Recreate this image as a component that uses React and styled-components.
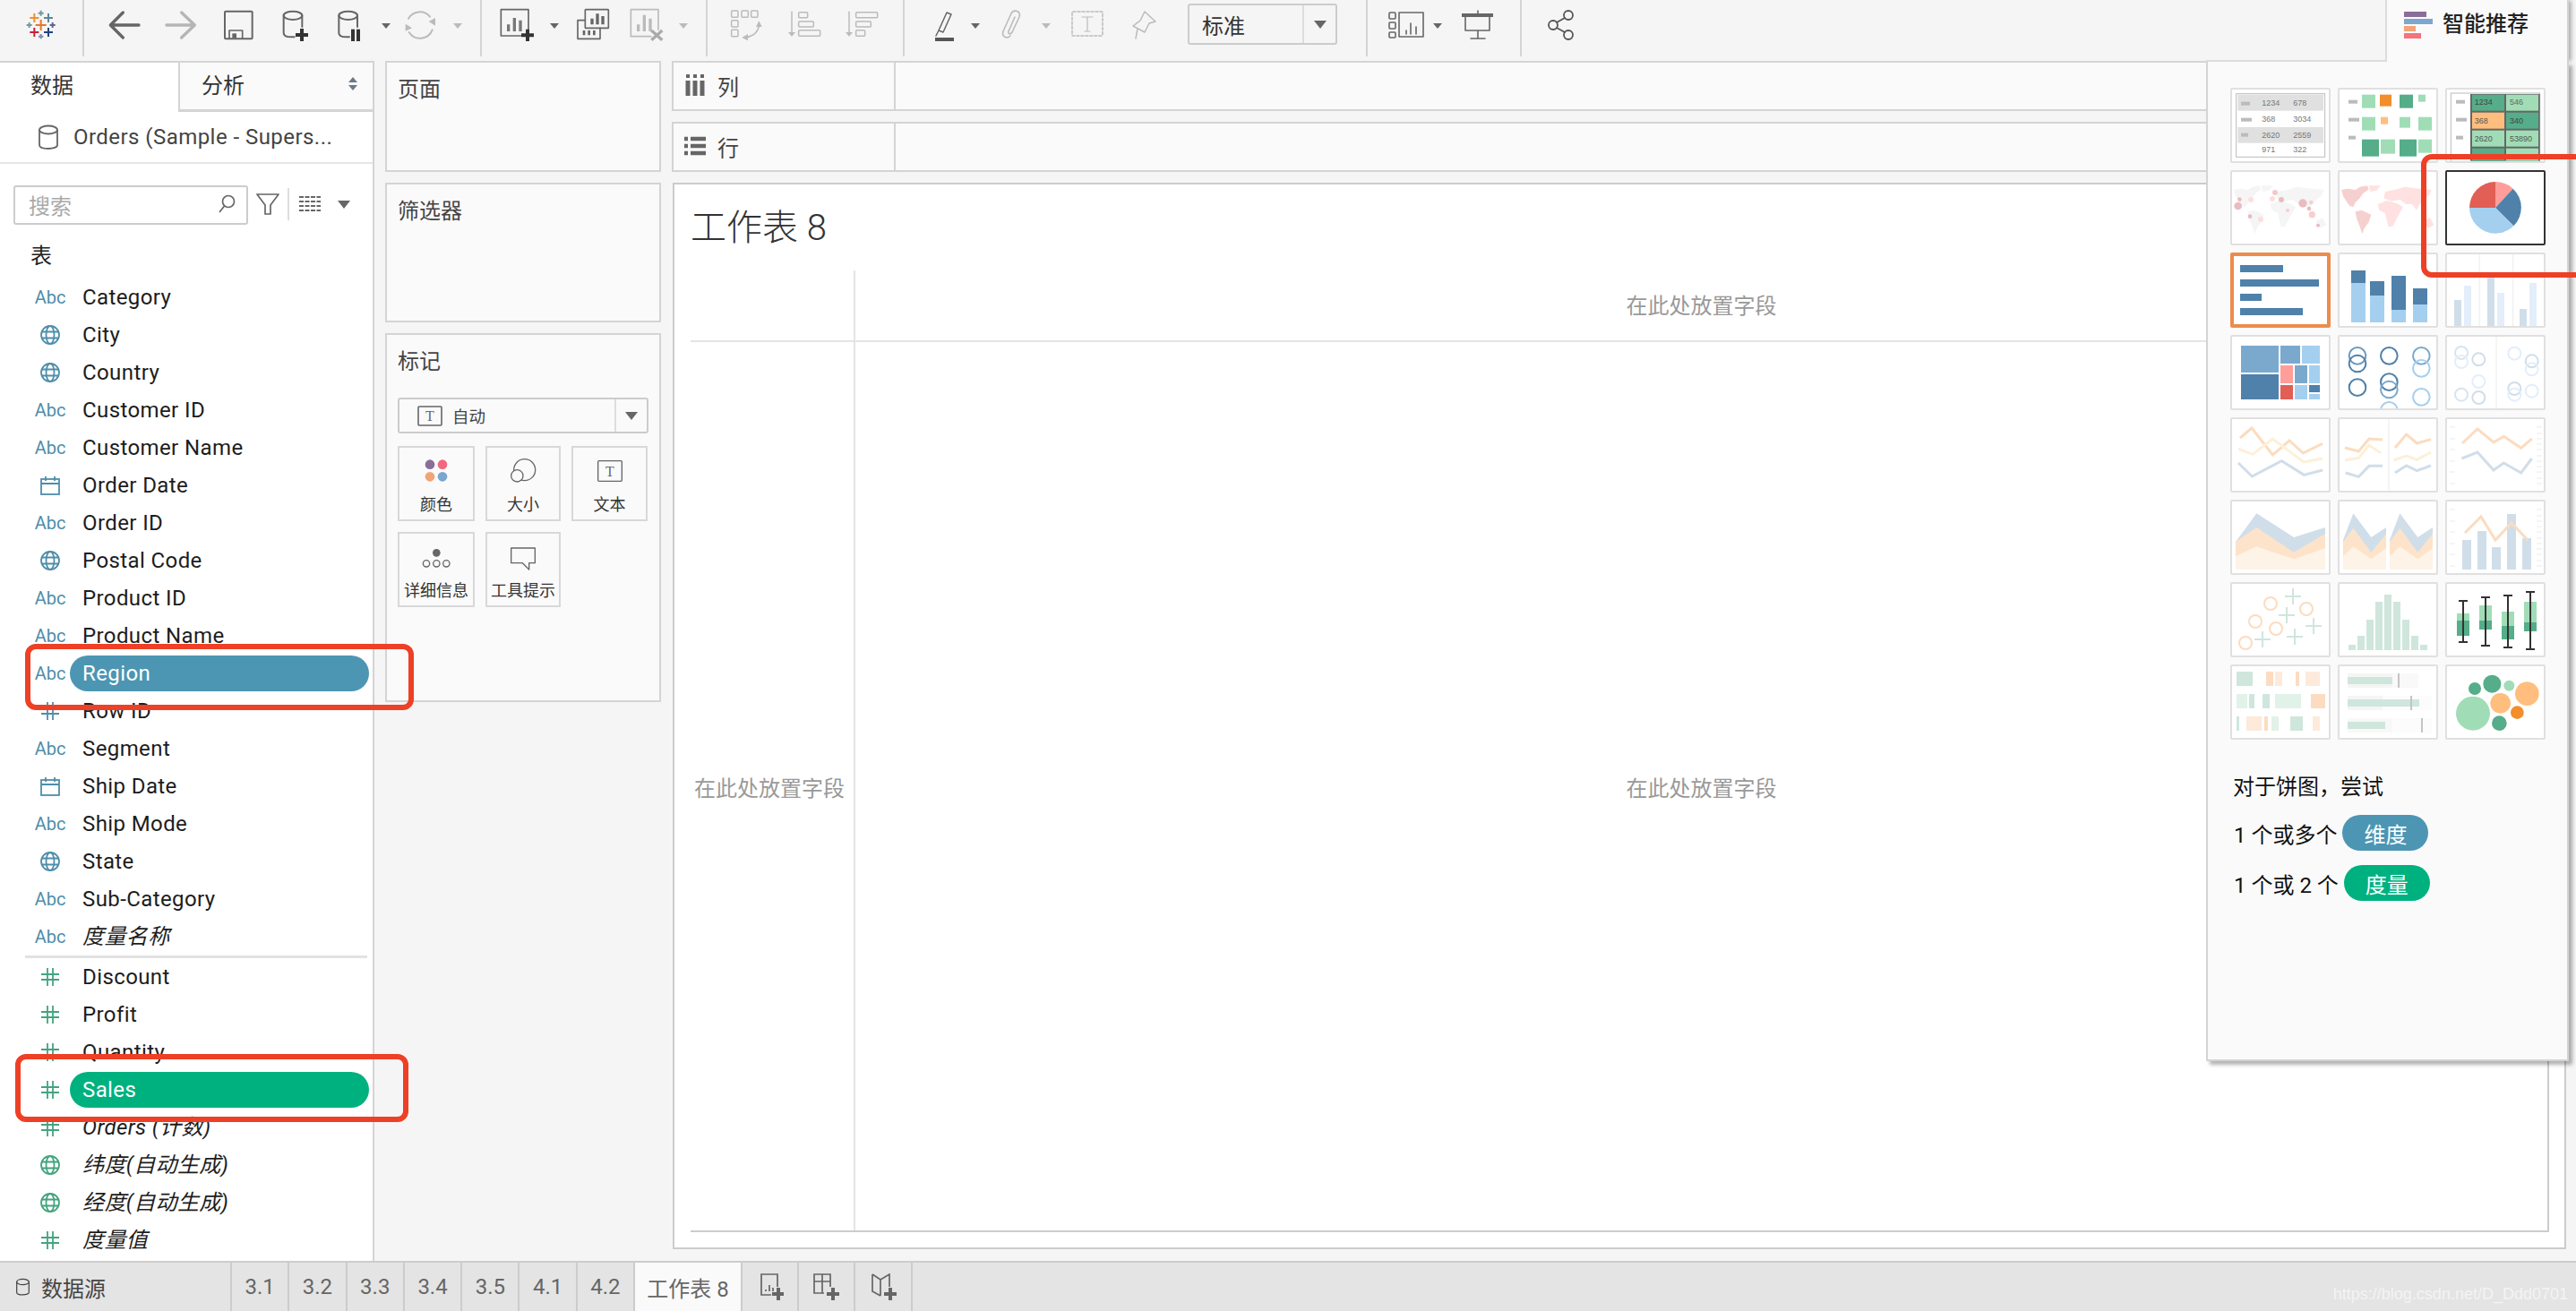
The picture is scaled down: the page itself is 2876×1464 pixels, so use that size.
import React from 'react';
import styled, { createGlobalStyle } from 'styled-components';

const GlobalStyle = createGlobalStyle`
  html, body { margin: 0; padding: 0; background: #f5f5f5; }
  body { font-family: Roboto, "Noto Sans CJK SC", sans-serif; color: #222; }
  * { box-sizing: border-box; }
`;

const LINE = '#d4d4d4';
const DIM = '#4e8eaa';
const MEASURE = '#43a47f';

const Page = styled.div`
  position: relative;
  width: 2876px;
  height: 1464px;
  overflow: hidden;
  display: flex;
  flex-direction: column;
  background: #f5f5f5;
`;

/* toolbar */
const Toolbar = styled.header`
  flex: 0 0 68px;
  display: flex;
  align-items: flex-start;
`;
const ToolSep = styled.div`
  flex: 0 0 2px;
  height: 63px;
  background: ${LINE};
`;
const ToolSvg = styled.svg`
  flex: none;
  display: block;
`;
const ModeSelect = styled.div`
  margin: 4px 32px 0 21px;
  width: 167px;
  height: 46px;
  display: flex;
  align-items: center;
  border: 2px solid #ccc;
  border-radius: 3px;
  font-size: 24px;
  color: #333;
`;
const ModeLabel = styled.span`
  flex: 1;
  padding-left: 14px;
`;
const CaretCell = styled.div`
  flex: 0 0 ${p => p.$w}px;
  height: 100%;
  border-left: 2px solid #ddd;
  display: flex;
  align-items: center;
  justify-content: center;
`;
const Caret = styled.i`
  display: block;
  width: 0;
  height: 0;
  border-left: 7px solid transparent;
  border-right: 7px solid transparent;
  border-top: 9px solid #666;
`;

const Tool = ({ x, w, k = 3, children }) => (
  <ToolSvg width={w} height={63} viewBox={`${x} 0 ${w * k} ${63 * k}`} fill="none" strokeLinecap="round" strokeLinejoin="round">
    {children}
  </ToolSvg>
);

const Cross = ({ x, y, a, c, s = 6 }) => (
  <path d={`M${x - a} ${y}H${x + a}M${x} ${y - a}V${y + a}`} stroke={c} strokeWidth={s} strokeLinecap="butt" />
);

/* main */
const Main = styled.main`
  flex: 1;
  display: flex;
  min-height: 0;
`;

/* data pane */
const DataPane = styled.aside`
  flex: 0 0 418px;
  background: #fff;
  border-top: 2px solid ${LINE};
  border-right: 2px solid ${LINE};
  display: flex;
  flex-direction: column;
  overflow: hidden;
`;
const PaneTabs = styled.div`
  flex: 0 0 55px;
  display: flex;
`;
const PaneTab = styled.div`
  flex: 0 0 ${p => p.$w}px;
  display: flex;
  align-items: center;
  justify-content: space-between;
  padding: 0 17px 9px ${p => p.$pad}px;
  font-size: 24px;
  color: #333;
  ${p => p.$off && `
    background: #fafafa;
    border-left: 2px solid ${LINE};
    border-bottom: 3px solid ${LINE};
    padding-bottom: 6px;
  `}
`;
const UpDown = styled.svg`
  display: block;
`;
const SourceRow = styled.div`
  flex: 0 0 58px;
  display: flex;
  align-items: center;
  gap: 17px;
  padding-left: 43px;
  border-bottom: 2px solid #e6e6e6;
  font-size: 24px;
  letter-spacing: 0.45px;
  color: #444;
  white-space: nowrap;
`;
const SearchRow = styled.div`
  flex: 0 0 68px;
  padding: 24px 0 0 15px;
  display: flex;
  align-items: flex-start;
`;
const SearchBox = styled.div`
  flex: 0 0 262px;
  height: 44px;
  border: 2px solid #ccc;
  border-radius: 3px;
  display: flex;
  align-items: center;
  justify-content: space-between;
  padding: 0 12px 2px 15px;
  font-size: 24px;
  color: #aaa;
`;
const SearchTool = styled.svg`
  flex: none;
  display: block;
  margin: ${p => p.$top}px 0 0 ${p => p.$left}px;
`;
const SearchSep = styled.div`
  flex: 0 0 2px;
  height: 36px;
  margin: 3px 0 0 9px;
  background: #ddd;
`;
const ListTitle = styled.div`
  flex: 0 0 60px;
  padding: 21px 0 0 34px;
  font-size: 24px;
  line-height: 28px;
  color: #222;
`;
const FieldList = styled.div`
  display: flex;
  flex-direction: column;
`;
const FieldRow = styled.div`
  height: 42px;
  display: flex;
  align-items: center;
  padding-left: 34px;
`;
const FieldIcon = styled.div`
  flex: 0 0 44px;
  display: flex;
  justify-content: center;
  align-items: center;
  font-size: 20px;
  color: ${p => p.$c};
`;
const FieldName = styled.div`
  flex: 0 0 334px;
  height: 40px;
  line-height: 40px;
  padding-left: 14px;
  border-radius: 20px;
  font-size: 24px;
  letter-spacing: 0.4px;
  white-space: nowrap;
  color: ${p => (p.$pill ? '#fff' : '#1d1d1d')};
  background: ${p => p.$pill || 'transparent'};
  font-style: ${p => (p.$em ? 'italic' : 'normal')};
`;
const FieldRule = styled.div`
  height: 3px;
  margin: 0 6px 0 28px;
  background: #e2e2e2;
`;

/* cards column */
const CardsColumn = styled.section`
  flex: 0 0 332px;
  padding: 0 12px;
  display: flex;
  flex-direction: column;
  gap: 12px;
`;
const Panel = styled.div`
  flex: 0 0 ${p => p.$h}px;
  background: #fafafa;
  border: 2px solid ${LINE};
  padding: 16px 12px 0;
`;
const PanelTitle = styled.div`
  font-size: 24px;
  line-height: 28px;
  color: #444;
`;
const MarkSelect = styled.div`
  margin-top: 26px;
  height: 40px;
  border: 2px solid #ccc;
  border-radius: 3px;
  display: flex;
  align-items: center;
  font-size: 18.5px;
  color: #444;
`;
const MarkLabel = styled.div`
  flex: 1;
  display: flex;
  align-items: center;
  gap: 11px;
  padding-left: 20px;
`;
const MarkGrid = styled.div`
  margin-top: 14px;
  display: grid;
  grid-template-columns: 86px 84px 85px;
  grid-auto-rows: 84px;
  gap: 12px;
`;
const MarkCard = styled.div`
  border: 2px solid #d8d8d8;
  display: flex;
  flex-direction: column;
  align-items: center;
  padding-top: 6px;
  font-size: 18px;
  line-height: 24px;
  color: #333;
  white-space: nowrap;
`;
const MarkIcon = styled.svg`
  display: block;
  margin-bottom: 10px;
  flex: none;
`;

/* view column */
const ViewColumn = styled.section`
  flex: 1;
  min-width: 0;
  padding: 0 11px 13px 0;
  display: flex;
  flex-direction: column;
  gap: 12px;
`;
const Shelf = styled.div`
  flex: 0 0 56px;
  display: flex;
  background: #fafafa;
  border: 2px solid ${LINE};
`;
const ShelfHead = styled.div`
  flex: 0 0 248px;
  border-right: 2px solid ${LINE};
  display: flex;
  align-items: center;
  gap: 13px;
  padding: 0 0 2px 12px;
  font-size: 24px;
  color: #444;
`;
const Sheet = styled.div`
  flex: 1;
  min-height: 0;
  background: #fff;
  border: 2px solid #ccc;
  margin-left: 1px;
  padding: 0 17px 17px 18px;
  display: flex;
  flex-direction: column;
`;
const SheetTitle = styled.h1`
  flex: 0 0 96px;
  margin: 0;
  padding: 22px 0 0;
  font-size: 40px;
  line-height: 54px;
  font-weight: 300;
  color: #333;
`;
const Plot = styled.div`
  flex: 1;
  display: grid;
  grid-template-columns: 184px 1fr;
  grid-template-rows: 80px 1fr;
  border-right: 2px solid #ccc;
  border-bottom: 2px solid #ccc;
`;
const DropCell = styled.div`
  display: flex;
  align-items: center;
  justify-content: center;
  font-size: 24px;
  color: #999;
  ${p => p.$right && 'border-right: 2px solid #e4e4e4; padding-right: 6px;'}
  ${p => p.$under && 'border-bottom: 2px solid #e4e4e4; padding-bottom: 3px;'}
`;

/* sheet tabs */
const TabBar = styled.footer`
  flex: 0 0 56px;
  display: flex;
  background: #e4e4e4;
  border-top: 2px solid #ccc;
  font-size: 24px;
  color: #666;
`;
const SourceTab = styled.div`
  flex: 0 0 259px;
  display: flex;
  align-items: center;
  gap: 13px;
  padding-left: 18px;
  color: #444;
  border-right: 2px solid #ccc;
`;
const SheetTab = styled.div`
  flex: 0 0 ${p => p.$w}px;
  display: flex;
  align-items: center;
  justify-content: center;
  padding-left: ${p => p.$shift || 0}px;
  border-right: 2px solid #ccc;
  background: ${p => (p.$active ? '#fafafa' : 'transparent')};
`;
const Watermark = styled.div`
  position: absolute;
  right: 9px;
  bottom: 8px;
  font-family: "Liberation Sans", sans-serif;
  font-size: 18px;
  color: rgba(255, 255, 255, 0.6);
`;

/* show me flyout */
const ShowMe = styled.aside`
  position: absolute;
  top: 0;
  right: 8px;
  width: 405px;
  height: 1185px;
  display: flex;
  flex-direction: column;
`;
const ShowMeHead = styled.div`
  flex: 0 0 69px;
  display: flex;
`;
const HeadFiller = styled.div`
  flex: 0 0 202px;
  background: #f5f5f5;
  border-right: 2px solid #dcdcdc;
  border-bottom: 2px solid #dcdcdc;
`;
const HeadTab = styled.div`
  flex: 1;
  background: #fafafa;
  border-right: 2px solid ${LINE};
  box-shadow: 4px 0 4px -1px rgba(0, 0, 0, 0.28);
  display: flex;
  align-items: flex-start;
  gap: 11px;
  padding: 13px 0 0 19px;
  font-size: 24px;
  line-height: 28px;
  font-weight: 500;
  color: #222;
`;
const ShowMeBody = styled.div`
  flex: 1;
  background: #fafafa;
  border: 2px solid ${LINE};
  border-top: 0;
  box-shadow: 4px 4px 4px rgba(0, 0, 0, 0.3);
  padding: 29px 0 0 25px;
`;
const TileGrid = styled.div`
  display: grid;
  grid-template-columns: repeat(3, 112px);
  grid-auto-rows: 84px;
  gap: 8px;
`;
const Tile = styled.div`
  background: #fff;
  border: 2px solid ${p => p.$line || '#e0e0e0'};
  border-radius: 2px;
  ${p => p.$thick && `box-shadow: inset 0 0 0 2px ${p.$line};`}
`;
const TileSvg = styled.svg`
  display: block;
`;
const Hint = styled.div`
  margin: 39px 0 0 3px;
  font-size: 24px;
  line-height: 28px;
  color: #111;
`;
const HintRow = styled.div`
  display: flex;
  align-items: center;
  height: 40px;
  margin: ${p => p.$top}px 0 0 4px;
  font-size: 24px;
  color: #111;
  white-space: pre;
`;
const HintPill = styled.span`
  width: 96px;
  height: 40px;
  margin-left: ${p => p.$left}px;
  border-radius: 20px;
  background: ${p => p.$c};
  color: #fff;
  display: flex;
  align-items: center;
  justify-content: center;
`;

const Callout = styled.div`
  position: absolute;
  left: ${p => p.$x}px;
  top: ${p => p.$y}px;
  width: ${p => p.$w}px;
  height: ${p => p.$h}px;
  border: 6px solid #ee4026;
  border-radius: 12px;
  pointer-events: none;
`;

/* field icons */
const GlobeIcon = ({ c }) => (
  <svg width="22" height="22" viewBox="0 0 22 22" fill="none" stroke={c} strokeWidth="1.8">
    <circle cx="11" cy="11" r="10" />
    <ellipse cx="11" cy="11" rx="4.5" ry="10" />
    <path d="M1.5 7.5h19M1.5 14.5h19" />
  </svg>
);
const CalIcon = ({ c }) => (
  <svg width="22" height="21" viewBox="0 0 22 21" fill="none" stroke={c} strokeWidth="1.8">
    <rect x="1" y="3" width="20" height="17" />
    <path d="M1 8h20M6 0v5M16 0v5" />
  </svg>
);
const HashIcon = ({ c }) => (
  <svg width="20" height="20" viewBox="0 0 20 20" fill="none" stroke={c} strokeWidth="1.8">
    <path d="M7 0v20M13 0v20M0 7h20M0 13h20" />
  </svg>
);
const TypeIcon = ({ t, c }) => {
  if (t === 'geo') return <GlobeIcon c={c} />;
  if (t === 'date') return <CalIcon c={c} />;
  if (t === 'num') return <HashIcon c={c} />;
  return 'Abc';
};

const dimensions = [
  ['abc', 'Category'], ['geo', 'City'], ['geo', 'Country'], ['abc', 'Customer ID'],
  ['abc', 'Customer Name'], ['date', 'Order Date'], ['abc', 'Order ID'], ['geo', 'Postal Code'],
  ['abc', 'Product ID'], ['abc', 'Product Name'], ['abc', 'Region', '#4c96b3'], ['num', 'Row ID'],
  ['abc', 'Segment'], ['date', 'Ship Date'], ['abc', 'Ship Mode'], ['geo', 'State'],
  ['abc', 'Sub-Category'], ['abc', '度量名称', null, true],
];
const measures = [
  ['num', 'Discount'], ['num', 'Profit'], ['num', 'Quantity'], ['num', 'Sales', '#00b180'],
  ['num', 'Orders (计数)', null, true], ['geo', '纬度(自动生成)', null, true],
  ['geo', '经度(自动生成)', null, true], ['num', '度量值', null, true],
];

const Field = ({ f, c }) => (
  <FieldRow>
    <FieldIcon $c={c}><TypeIcon t={f[0]} c={c} /></FieldIcon>
    <FieldName $pill={f[2]} $em={f[3]}>{f[1]}</FieldName>
  </FieldRow>
);

/* thumbnail helpers: coordinates are tile pixels x3 */
const B = ({ x, X, y, Y, c }) => <rect x={x} y={y} width={X - x} height={Y - y} fill={c} />;
const L = ({ p, c, w = 9 }) => <polyline points={p} fill="none" stroke={c} strokeWidth={w} strokeLinejoin="miter" />;
const A = ({ p, c }) => <polygon points={p} fill={c} />;
const O = ({ x, y, r, c, w = 6 }) => <circle cx={x} cy={y} r={r} fill="none" stroke={c} strokeWidth={w} />;
const F = ({ x, y, r, c }) => <circle cx={x} cy={y} r={r} fill={c} />;
const T = ({ x, y, children, c = '#777' }) => (
  <text x={x} y={y} fontSize="27" fill={c} fontFamily="'Liberation Sans', sans-serif">{children}</text>
);

const DK = '#4f81aa';
const MID = '#7ba9cd';
const LT = '#a5cfee';
const G1 = '#a0ddb6';
const G2 = '#55ad89';
const G3 = '#cfe6dc';
const G4 = '#e1f2e9';
const OR = '#fbdcc0';
const OR2 = '#fdeadb';
const YL = '#fdf0d8';
const BL = '#d0deea';
const BL2 = '#e3eefa';

const Thumb = ({ x, y, line, thick, children }) => (
  <Tile $line={line} $thick={thick}>
    <TileSvg width="108" height="80" viewBox={`${x + 6} ${y + 6} 324 240`}>{children}</TileSvg>
  </Tile>
);

const Continents = ({ a, b, dx }) => (
  <g transform={`translate(${dx} 0)`}>
    <A c={a} p="378,72 400,68 425,72 440,62 465,58 470,70 450,85 440,100 425,115 418,130 405,125 395,110 385,95" />
    <A c={b} p="470,58 510,58 495,75 475,78" />
    <A c={a} p="425,145 445,140 478,155 470,180 455,200 448,220 440,195 430,170" />
    <A c={b} p="525,78 555,72 590,62 640,68 680,72 672,90 655,105 640,120 630,140 615,120 595,120 575,105 545,110 520,100" />
    <A c={b} p="500,120 530,108 565,118 585,130 565,165 550,195 535,195 525,150 505,140" />
    <A c={b} p="655,175 675,165 688,190 670,200 655,190" />
  </g>
);

const axisTicks = (ys, x, X, c = '#f0f0f0') => ys.map(y => <B key={`${x}-${y}`} x={x} X={X} y={y - 2} Y={y + 2} c={c} />);
const leftTicks = [171, 210, 246, 285, 321, 360];
const rightTicks = [171, 192, 210, 228, 246, 267, 285, 303, 321, 342, 360];

const thumbs = [
  <Thumb key="1" x={150} y={295}>
    <rect x="170" y="315" width="297" height="212" fill="none" stroke="#bbb" strokeWidth="3" />
    <B x={175} X={462} y={318} Y={372} c="#e0e0e0" />
    <B x={175} X={462} y={427} Y={480} c="#e0e0e0" />
    <B x={186} X={216} y={342} Y={354} c="#bbb" />
    <B x={186} X={222} y={396} Y={408} c="#bbb" />
    <B x={186} X={210} y={447} Y={459} c="#bbb" />
    <T x={256} y={356}>1234</T><T x={361} y={356}>678</T>
    <T x={256} y={410}>368</T><T x={361} y={410}>3034</T>
    <T x={256} y={464}>2620</T><T x={361} y={464}>2559</T>
    <T x={256} y={512}>971</T><T x={361} y={512}>322</T>
  </Thumb>,
  <Thumb key="2" x={510} y={295}>
    <B x={546} X={576} y={336} Y={348} c="#bbb" /><B x={546} X={582} y={396} Y={408} c="#bbb" /><B x={546} X={570} y={456} Y={468} c="#bbb" />
    <B x={591} X={636} y={318} Y={363} c={G1} /><B x={651} X={690} y={318} Y={357} c="#f28e2b" /><B x={717} X={762} y={318} Y={363} c={G2} /><B x={780} X={804} y={318} Y={342} c={G1} />
    <B x={591} X={636} y={393} Y={438} c={G1} /><B x={654} X={678} y={393} Y={417} c="#ffbe7d" /><B x={717} X={753} y={393} Y={429} c={G1} /><B x={780} X={825} y={393} Y={438} c={G1} />
    <B x={591} X={648} y={468} Y={525} c={G2} /><B x={654} X={702} y={468} Y={516} c={G1} /><B x={717} X={774} y={468} Y={525} c={G2} /><B x={780} X={825} y={468} Y={513} c={G1} />
  </Thumb>,
  <Thumb key="3" x={870} y={295}>
    <rect x="889" y="313" width="298" height="240" fill="none" stroke="#bbb" strokeWidth="3" />
    <B x={906} X={936} y={336} Y={348} c="#bbb" /><B x={906} X={942} y={396} Y={408} c="#bbb" /><B x={906} X={930} y={456} Y={468} c="#bbb" />
    <B x={954} X={1187} y={316} Y={540} c="#666" />
    <B x={960} X={1068} y={318} Y={372} c={G2} /><B x={1074} X={1182} y={318} Y={372} c={G1} />
    <B x={960} X={1068} y={378} Y={432} c="#ffbe7d" /><B x={1074} X={1182} y={378} Y={432} c={G2} />
    <B x={960} X={1068} y={438} Y={492} c={G1} /><B x={1074} X={1182} y={438} Y={492} c={G1} />
    <B x={960} X={1068} y={498} Y={540} c={G2} /><B x={1074} X={1182} y={498} Y={540} c={G1} />
    <T x={968} y={352} c="#444">1234</T><T x={1086} y={352} c="#666">546</T>
    <T x={968} y={414} c="#555">368</T><T x={1086} y={414} c="#444">340</T>
    <T x={968} y={474} c="#555">2620</T><T x={1086} y={474} c="#555">53890</T>
  </Thumb>,
  <Thumb key="4" x={6} y={6}>
    <Continents a="#f5f5f5" b="#f5f5f5" dx={-360} />
    <F x={32} y={126} r={13} c="#e8bcc0" /><F x={37} y={104} r={7} c="#e8bcc0" /><F x={75} y={105} r={9} c="#fddede" />
    <F x={72} y={161} r={7} c="#e8bcc0" /><F x={108} y={171} r={9} c="#fddede" /><F x={156} y={81} r={9} c="#f2c9c9" />
    <F x={147} y={102} r={9} c="#fddede" /><F x={177} y={105} r={9} c="#e8bcc0" /><F x={198} y={141} r={6} c="#f7cfcf" />
    <F x={249} y={117} r={14} c="#e8bcc0" /><F x={277} y={114} r={7} c="#f7cfcf" /><F x={270} y={135} r={7} c="#e8bcc0" />
    <F x={280} y={155} r={11} c="#f7cfcf" /><F x={300} y={191} r={6} c="#e8bcc0" />
  </Thumb>,
  <Thumb key="5" x={366} y={6}>
    <Continents a="#f6d0ce" b="#ffe1e1" dx={0} />
  </Thumb>,
  <Thumb key="6" x={870} y={570} line="#333">
    <path d="M1038 696L1038 609A87 87 0 0 1 1097 632Z" fill="#ff9d9a" />
    <path d="M1038 696L1097 632A87 87 0 0 1 1099 757Z" fill={DK} />
    <path d="M1038 696L1099 757A87 87 0 0 1 951 696Z" fill={LT} />
    <path d="M1038 696L951 696A87 87 0 0 1 1038 609Z" fill="#e15f55" />
  </Thumb>,
  <Thumb key="7" x={150} y={846} line="#ed8c4c" thick>
    <B x={183} X={327} y={888} Y={912} c={DK} /><B x={183} X={447} y={936} Y={960} c={DK} />
    <B x={183} X={255} y={984} Y={1008} c={DK} /><B x={183} X={393} y={1032} Y={1056} c={DK} />
  </Thumb>,
  <Thumb key="8" x={510} y={846}>
    <B x={555} X={603} y={906} Y={948} c={DK} /><B x={555} X={603} y={948} Y={1080} c={LT} />
    <B x={618} X={666} y={942} Y={990} c={DK} /><B x={618} X={666} y={990} Y={1080} c={LT} />
    <B x={690} X={738} y={924} Y={1038} c={DK} /><B x={690} X={738} y={1038} Y={1080} c={LT} />
    <B x={762} X={810} y={966} Y={1020} c={DK} /><B x={762} X={810} y={1020} Y={1080} c={LT} />
  </Thumb>,
  <Thumb key="9" x={870} y={846}>
    <B x={983} X={987} y={852} Y={1092} c="#f0f0f0" /><B x={1095} X={1099} y={852} Y={1092} c="#f0f0f0" />
    <B x={900} X={924} y={1005} Y={1092} c={BL} /><B x={933} X={957} y={957} Y={1092} c={BL2} />
    <B x={1011} X={1035} y={912} Y={1092} c={BL} /><B x={1044} X={1068} y={981} Y={1092} c={BL2} />
    <B x={1119} X={1143} y={1035} Y={1092} c={BL} /><B x={1152} X={1176} y={948} Y={1092} c={BL2} />
  </Thumb>,
  <Thumb key="10" x={150} y={1122}>
    <B x={186} X={312} y={1158} Y={1248} c={MID} /><B x={318} X={384} y={1158} Y={1218} c={MID} /><B x={390} X={450} y={1158} Y={1218} c={LT} />
    <B x={186} X={312} y={1254} Y={1338} c={DK} />
    <B x={318} X={360} y={1224} Y={1284} c="#ff9d9a" /><B x={366} X={408} y={1224} Y={1284} c={MID} /><B x={414} X={450} y={1224} Y={1284} c={LT} />
    <B x={318} X={360} y={1290} Y={1338} c="#e15f55" /><B x={366} X={408} y={1290} Y={1338} c={LT} />
    <B x={414} X={450} y={1290} Y={1314} c={DK} /><B x={414} X={450} y={1320} Y={1338} c={LT} />
  </Thumb>,
  <Thumb key="11" x={510} y={1122}>
    <O x={576} y={1192} r={28} c="#6b9bc0" /><O x={576} y={1218} r={28} c={DK} /><O x={682} y={1192} r={28} c={DK} />
    <O x={790} y={1192} r={28} c={MID} /><O x={790} y={1234} r={28} c={LT} /><O x={576} y={1298} r={28} c={DK} />
    <O x={682} y={1280} r={28} c={DK} /><O x={682} y={1305} r={28} c={MID} /><O x={790} y={1330} r={28} c={LT} />
    <O x={682} y={1375} r={28} c={LT} />
  </Thumb>,
  <Thumb key="12" x={870} y={1122}>
    <B x={1039} X={1043} y={1128} Y={1368} c="#f0f0f0" />
    <O x={924} y={1182} r={21} c="#d8e4f0" /><O x={924} y={1212} r={21} c={BL2} /><O x={982} y={1204} r={21} c={BL} />
    <O x={982} y={1278} r={21} c={BL2} /><O x={924} y={1322} r={21} c="#d8e4f0" /><O x={982} y={1332} r={21} c={BL} />
    <O x={1102} y={1184} r={21} c={BL2} /><O x={1160} y={1210} r={21} c={BL} /><O x={1160} y={1237} r={21} c={BL2} />
    <O x={1102} y={1302} r={21} c={BL} /><O x={1102} y={1322} r={21} c={BL2} /><O x={1160} y={1310} r={21} c={BL2} />
  </Thumb>,
  <Thumb key="13" x={150} y={138}>
    <L p="183,207 222,174 292,264 348,216 394,258 459,226" c={OR} />
    <L p="178,244 225,262 292,210 396,288 459,276" c={YL} />
    <L p="177,291 223,336 322,284 397,331 459,315" c={BL} />
  </Thumb>,
  <Thumb key="14" x={510} y={138}>
    <B x={679} X={683} y={144} Y={384} c="#f0f0f0" />
    <L p="534,240 580,252 615,210 660,213" c={OR} /><L p="534,282 580,274 615,232 655,258" c={YL} /><L p="536,324 580,337 615,301 660,301" c={BL} />
    <L p="702,240 740,195 775,225 822,212" c={OR} /><L p="697,282 740,267 775,280 822,255" c={YL} /><L p="702,324 740,300 775,317 822,300" c={BL} />
  </Thumb>,
  <Thumb key="15" x={870} y={138}>
    {axisTicks(leftTicks, 885, 903)}{axisTicks(rightTicks, 1176, 1194)}
    <L p="927,225 978,177 1032,222 1066,202 1124,241 1160,210" c={OR} />
    <L p="925,276 978,255 1032,315 1066,291 1124,324 1160,276" c={BL} />
  </Thumb>,
  <Thumb key="16" x={150} y={414}>
    <A p="168,555 238,460 363,540 468,507 468,648 168,648" c={BL} />
    <A p="168,555 238,507 363,590 468,528 468,648 168,648" c="#fde3ca" />
    <A p="168,603 238,571 363,613 468,577 468,648 168,648" c="#fdf3e7" />
  </Thumb>,
  <Thumb key="17" x={510} y={414}>
    <A p="528,549 562,460 622,540 672,507 672,648 528,648" c={BL} />
    <A p="528,555 562,509 622,590 672,528 672,648 528,648" c="#fde3ca" />
    <A p="528,603 562,571 622,613 672,577 672,648 528,648" c="#fdf3e7" />
    <A p="684,549 718,460 778,540 828,507 828,648 684,648" c={BL} />
    <A p="684,555 718,509 778,590 828,528 828,648 684,648" c="#fde3ca" />
    <A p="684,603 718,571 778,613 828,577 828,648 684,648" c="#fdf3e7" />
  </Thumb>,
  <Thumb key="18" x={870} y={414}>
    {axisTicks(leftTicks.map(y => y + 276), 885, 903)}{axisTicks(rightTicks.map(y => y + 276), 1176, 1194)}
    <B x={927} X={957} y={549} Y={648} c={BL} /><B x={978} X={1008} y={519} Y={648} c={BL} /><B x={1026} X={1056} y={573} Y={648} c={BL} />
    <B x={1077} X={1107} y={462} Y={648} c={BL} /><B x={1128} X={1158} y={543} Y={648} c={BL} />
    <L p="936,525 990,471 1038,549 1092,492 1146,549" c={OR} />
  </Thumb>,
  <Thumb key="19" x={150} y={690}>
    <O x={285} y={762} r={21} c={OR} /><O x={405} y={780} r={21} c={OR} /><O x={234} y={822} r={21} c={OR} />
    <O x={303} y={846} r={21} c={OR} /><O x={201} y={894} r={21} c={OR} />
    <Cross x={360} y={738} a={27} c={G3} /><Cross x={339} y={801} a={27} c={G3} /><Cross x={429} y={837} a={27} c={G3} />
    <Cross x={258} y={882} a={27} c={G3} /><Cross x={366} y={873} a={27} c={G3} />
  </Thumb>,
  <Thumb key="20" x={510} y={690}>
    {[[546, 900], [576, 870], [606, 816], [636, 756], [666, 732], [696, 756], [726, 816], [756, 870], [786, 900]].map(([x, y]) => (
      <B key={x} x={x} X={x + 24} y={y} Y={918} c={G3} />
    ))}
  </Thumb>,
  <Thumb key="21" x={870} y={690}>
    {[[909, 795, 819, 870, 753, 891], [984, 768, 819, 849, 741, 903], [1059, 789, 837, 882, 735, 909], [1134, 756, 825, 855, 723, 915]].map(([x, a, b, c, t, m]) => (
      <g key={x}>
        <B x={x} X={x + 42} y={a} Y={b} c={G1} /><B x={x} X={x + 42} y={b} Y={c} c={G2} />
        <path d={`M${x + 21} ${t}V${m}M${x + 6} ${t}H${x + 36}M${x + 6} ${m}H${x + 36}`} stroke="#333" strokeWidth="6" fill="none" />
      </g>
    ))}
  </Thumb>,
  <Thumb key="22" x={150} y={966}>
    <B x={171} X={225} y={990} Y={1038} c={G3} /><B x={270} X={294} y={990} Y={1038} c={OR} /><B x={300} X={324} y={990} Y={1038} c={OR2} /><B x={369} X={381} y={990} Y={1038} c={OR} /><B x={402} X={450} y={990} Y={1038} c={OR2} />
    <B x={171} X={207} y={1065} Y={1113} c={G4} /><B x={213} X={231} y={1065} Y={1113} c={G3} /><B x={258} X={282} y={1065} Y={1113} c={G3} /><B x={300} X={387} y={1065} Y={1113} c={G4} /><B x={420} X={468} y={1065} Y={1113} c={OR} />
    <B x={171} X={180} y={1140} Y={1188} c={G3} /><B x={204} X={255} y={1140} Y={1188} c={OR2} /><B x={264} X={276} y={1140} Y={1188} c={OR} /><B x={288} X={312} y={1140} Y={1188} c={G4} /><B x={351} X={393} y={1140} Y={1188} c={G3} /><B x={426} X={450} y={1140} Y={1188} c={OR2} />
  </Thumb>,
  <Thumb key="23" x={510} y={966}>
    <B x={543} X={780} y={996} Y={1044} c="#f9f9f9" /><B x={543} X={693} y={996} Y={1044} c="#f5f5f5" /><B x={543} X={693} y={1008} Y={1032} c={G3} /><B x={711} X={717} y={996} Y={1044} c="#c4c4c4" />
    <B x={543} X={825} y={1071} Y={1119} c="#fcfcfc" /><B x={543} X={660} y={1071} Y={1119} c="#f5f5f5" /><B x={543} X={783} y={1083} Y={1107} c={G3} /><B x={753} X={759} y={1071} Y={1119} c="#c4c4c4" />
    <B x={543} X={825} y={1146} Y={1194} c="#fcfcfc" /><B x={543} X={693} y={1146} Y={1194} c="#f8f8f8" /><B x={543} X={669} y={1158} Y={1182} c={G3} /><B x={789} X={795} y={1146} Y={1194} c="#c4c4c4" />
  </Thumb>,
  <Thumb key="24" x={870} y={966}>
    <F x={963} y={1130} r={57} c={G1} /><F x={1027} y={1031} r={30} c={G2} /><F x={969} y={1047} r={21} c={G2} /><F x={1084} y={1037} r={18} c={G1} />
    <F x={1144} y={1064} r={40} c="#ffbe7d" /><F x={1055} y={1096} r={34} c="#ffbe7d" /><F x={1111} y={1127} r={22} c="#f28e2b" /><F x={1051} y={1163} r={25} c={G2} />
  </Thumb>,
];

const DbIcon = ({ w, h, c = '#666' }) => (
  <svg width={w} height={h} viewBox="0 0 22 28" fill="none" stroke={c} strokeWidth="1.8">
    <ellipse cx="11" cy="6" rx="10" ry="4.5" />
    <path d="M1 6v17c0 2.500 4.500 4 10 4s10-1.500 10-4V6" />
  </svg>
);

const TBox = ({ w, h }) => (
  <svg width={w} height={h} viewBox="0 0 28 23" fill="none">
    <rect x="1" y="1" width="26" height="21" rx="1" stroke="#666" strokeWidth="1.6" />
    <text x="14" y="17" textAnchor="middle" fontSize="16" fill="#666" fontFamily="'Liberation Serif', serif">T</text>
  </svg>
);

const App = () => (
  <Page>
    <GlobalStyle />
    <Toolbar>
      <Tool x={0} w={92}>
        <Cross x={137} y={84} a={18} c="#e8762d" />
        <Cross x={115} y={60} a={15} c="#f28e2b" /><Cross x={162} y={60} a={15} c="#59879b" />
        <Cross x={115} y={108} a={15} c="#c72035" /><Cross x={162} y={108} a={15} c="#1f447e" />
        <Cross x={137} y={44} a={9} c="#7099a6" /><Cross x={137} y={122} a={8} c="#7b8ab0" />
        <Cross x={98} y={84} a={9} c="#7099a6" /><Cross x={176} y={84} a={9} c="#5b6591" />
      </Tool>
      <ToolSep />
      <Tool x={282} w={76}>
        <path d="M465 84H372M412 42L370 84L412 126" stroke="#666" strokeWidth="10" />
      </Tool>
      <Tool x={510} w={65}>
        <path d="M558 84H650M608 42L652 84L608 126" stroke="#b5b5b5" strokeWidth="10" />
      </Tool>
      <Tool x={705} w={65}>
        <rect x="753" y="38" width="92" height="92" rx="3" stroke="#666" strokeWidth="6" />
        <path d="M768 128V102H812V128" stroke="#666" strokeWidth="5" />
        <rect x="778" y="112" width="14" height="16" fill="#666" />
      </Tool>
      <Tool x={900} w={65}>
        <ellipse cx="981" cy="52" rx="31" ry="14" stroke="#666" strokeWidth="6" />
        <path d="M950 52V110Q950 124 975 124H986M1012 52V90" stroke="#666" strokeWidth="6" />
        <path d="M1011 96V138M990 117H1032" stroke="#333" strokeWidth="12" strokeLinecap="butt" />
      </Tool>
      <Tool x={1095} w={55}>
        <ellipse cx="1166" cy="52" rx="31" ry="14" stroke="#666" strokeWidth="6" />
        <path d="M1135 52V110Q1135 124 1160 124H1170M1197 52V90" stroke="#666" strokeWidth="6" />
        <rect x="1176" y="98" width="12" height="40" fill="#333" /><rect x="1194" y="98" width="12" height="40" fill="#333" />
      </Tool>
      <Tool x={1260} w={25}><path d="M1278 78H1308L1293 96Z" fill="#666" /></Tool>
      <Tool x={1335} w={50}>
        <path d="M1440 56A44 44 0 0 0 1368 62M1370 108A44 44 0 0 0 1448 100" stroke="#bbb" strokeWidth="6" />
        <path d="M1458 60V86L1436 72ZM1358 104V80L1380 94Z" fill="#bbb" />
      </Tool>
      <Tool x={1485} w={41}><path d="M1518 78H1548L1533 96Z" fill="#bbb" /></Tool>
      <ToolSep />
      <Tool x={54} w={67}>
        <path d="M210 100V32H118V120H185" stroke="#666" strokeWidth="5" />
        <path d="M143 82V105M163 60V105M183 68V105" stroke="#777" strokeWidth="10" strokeLinecap="butt" />
        <path d="M207 98V138M186 118H228" stroke="#333" strokeWidth="12" strokeLinecap="butt" />
      </Tool>
      <Tool x={255} w={25}><path d="M282 78H312L297 96Z" fill="#666" /></Tool>
      <Tool x={330} w={62}>
        <rect x="400" y="32" width="78" height="62" rx="2" stroke="#666" strokeWidth="5" />
        <path d="M423 62V82M441 46V82M459 54V82" stroke="#666" strokeWidth="10" strokeLinecap="butt" />
        <path d="M400 68H375V130H450V94" stroke="#666" strokeWidth="5" />
        <path d="M396 102V118M413 102V118M430 102V118" stroke="#666" strokeWidth="8" strokeLinecap="butt" />
      </Tool>
      <Tool x={516} w={60}>
        <path d="M645 100V32H553V122H620" stroke="#bbb" strokeWidth="5" />
        <path d="M578 82V105M598 50V105M618 62V105" stroke="#bbb" strokeWidth="10" strokeLinecap="butt" />
        <path d="M622 102L658 134M658 102L622 134" stroke="#aaa" strokeWidth="10" strokeLinecap="butt" />
      </Tool>
      <Tool x={696} w={36}><path d="M714 78H744L729 96Z" fill="#bbb" /></Tool>
      <ToolSep />
      <Tool x={810} w={78}>
        <g stroke="#bbb" strokeWidth="4.500">
          <rect x="890" y="36" width="22" height="22" rx="3" /><rect x="924" y="36" width="22" height="22" rx="3" /><rect x="956" y="36" width="22" height="22" rx="3" />
          <rect x="890" y="68" width="22" height="22" rx="3" /><rect x="890" y="100" width="22" height="22" rx="3" />
          <path d="M982 86Q978 118 938 126" />
        </g>
        <path d="M972 90H992L982 70ZM925 126L945 114V136Z" fill="#bbb" />
      </Tool>
      <Tool x={1044} w={60}>
        <path d="M1092 40V110" stroke="#bbb" strokeWidth="4.500" />
        <path d="M1080 108H1104L1092 122Z" fill="#bbb" />
        <g stroke="#bbb" strokeWidth="4.500">
          <rect x="1115" y="41" width="30" height="18" rx="3" /><rect x="1115" y="72" width="50" height="18" rx="3" /><rect x="1115" y="101" width="72" height="20" rx="3" />
        </g>
      </Tool>
      <Tool x={1224} w={80}>
        <path d="M1284 40V110" stroke="#bbb" strokeWidth="4.500" />
        <path d="M1272 108H1296L1284 122Z" fill="#bbb" />
        <g stroke="#bbb" strokeWidth="4.500">
          <rect x="1307" y="41" width="72" height="18" rx="3" /><rect x="1307" y="72" width="50" height="18" rx="3" /><rect x="1307" y="101" width="30" height="20" rx="3" />
        </g>
      </Tool>
      <ToolSep />
      <Tool x={1010} w={68} k={1}>
        <path d="M1057 14L1062 16L1053 36L1048 34ZM1048 34L1045 40" stroke="#666" strokeWidth="1.5" />
        <rect x="1044" y="42" width="21" height="4" fill="#555" />
      </Tool>
      <Tool x={1078} w={24} k={1}><path d="M1084 26H1094L1089 32Z" fill="#666" /></Tool>
      <Tool x={1102} w={53} k={1}>
        <path d="M1128 40C1124 44 1118 41 1120 35L1129 15C1132 10 1140 12 1138 19L1130 36C1128 39 1125 38 1126 35L1133 19" stroke="#bbb" strokeWidth="1.6" />
      </Tool>
      <Tool x={1155} w={30} k={1}><path d="M1163 26H1173L1168 32Z" fill="#bbb" /></Tool>
      <Tool x={1185} w={63} k={1}>
        <rect x="1197" y="13" width="34" height="27" rx="1" stroke="#bbb" strokeWidth="1.5" strokeDasharray="3 2" />
        <path d="M1208 19H1220M1214 19V35M1211 35H1217" stroke="#bbb" strokeWidth="1.2" />
      </Tool>
      <Tool x={1248} w={57} k={1}>
        <path d="M1278 13L1290 24L1283 26L1278 36L1265 29L1273 23ZM1270 32L1268 43" stroke="#bbb" strokeWidth="1.5" />
      </Tool>
      <ModeSelect>
        <ModeLabel>标准</ModeLabel>
        <CaretCell $w={37}><Caret /></CaretCell>
      </ModeSelect>
      <ToolSep />
      <Tool x={1527} w={70} k={1}>
        <g stroke="#666" strokeWidth="1.6">
          <rect x="1551" y="14" width="7" height="7" rx="1" /><rect x="1551" y="25" width="7" height="7" rx="1" /><rect x="1551" y="36" width="7" height="6" rx="1" />
          <rect x="1562" y="14" width="27" height="27" />
          <path d="M1570 34V38M1575 26V38M1581 30V38" />
        </g>
      </Tool>
      <Tool x={1597} w={25} k={1}><path d="M1600 26H1610L1605 32Z" fill="#666" /></Tool>
      <Tool x={1622} w={75} k={1}>
        <rect x="1632" y="15" width="35" height="4" fill="#666" />
        <path d="M1636 19V34H1663V19M1650 12V15M1650 34V43M1642 43H1658" stroke="#666" strokeWidth="1.6" />
      </Tool>
      <ToolSep />
      <Tool x={1699} w={70} k={1}>
        <g stroke="#555" strokeWidth="1.8">
          <circle cx="1734" cy="28" r="5" /><circle cx="1751" cy="17" r="5" /><circle cx="1751" cy="39" r="5" />
          <path d="M1738 25L1747 20M1738 31L1747 36" />
        </g>
      </Tool>
    </Toolbar>

    <Main>
      <DataPane>
        <PaneTabs>
          <PaneTab $w={199} $pad={34}>数据</PaneTab>
          <PaneTab $w={217} $pad={24} $off>
            分析
            <UpDown width="10" height="15" viewBox="0 0 10 15"><path d="M5 0L10 6H0ZM5 15L0 9H10Z" fill="#6c7a8a" /></UpDown>
          </PaneTab>
        </PaneTabs>
        <SourceRow>
          <DbIcon w={22} h={28} />
          Orders (Sample - Supers...
        </SourceRow>
        <SearchRow>
          <SearchBox>
            搜索
            <svg width="20" height="24" viewBox="0 0 20 24" fill="none" stroke="#666" strokeWidth="1.7">
              <circle cx="12" cy="9" r="6.500" /><path d="M7.500 14L2 21" />
            </svg>
          </SearchBox>
          <SearchTool $left={9} $top={8} width="26" height="26" viewBox="0 0 26 26" fill="none" stroke="#666" strokeWidth="1.7">
            <path d="M1 2H25L16 14V24H10V14Z" strokeLinejoin="round" />
          </SearchTool>
          <SearchSep />
          <SearchTool $left={11} $top={11} width="24" height="18" viewBox="0 0 24 18" stroke="#666" strokeWidth="2.200" strokeDasharray="5 1.500">
            <path d="M0 2H24M0 7H24M0 12H24M0 17H24" />
          </SearchTool>
          <SearchTool $left={19} $top={17} width="14" height="9" viewBox="0 0 14 9"><path d="M0 0H14L7 9Z" fill="#666" /></SearchTool>
        </SearchRow>
        <ListTitle>表</ListTitle>
        <FieldList>
          {dimensions.map(f => <Field key={f[1]} f={f} c={DIM} />)}
          <FieldRule />
          {measures.map(f => <Field key={f[1]} f={f} c={MEASURE} />)}
        </FieldList>
      </DataPane>

      <CardsColumn>
        <Panel $h={124}><PanelTitle>页面</PanelTitle></Panel>
        <Panel $h={156}><PanelTitle>筛选器</PanelTitle></Panel>
        <Panel $h={412}>
          <PanelTitle>标记</PanelTitle>
          <MarkSelect>
            <MarkLabel><TBox w={28} h={23} />自动</MarkLabel>
            <CaretCell $w={36}><Caret /></CaretCell>
          </MarkSelect>
          <MarkGrid>
            <MarkCard>
              <MarkIcon width="40" height="36" viewBox="136 438 120 108">
                <circle cx="175" cy="476" r="16" fill="#8a6d9b" /><circle cx="217" cy="476" r="16" fill="#f0697d" />
                <circle cx="175" cy="517" r="16" fill="#f2a477" /><circle cx="217" cy="517" r="16" fill="#7aa5cf" />
              </MarkIcon>
              颜色
            </MarkCard>
            <MarkCard>
              <MarkIcon width="40" height="36" viewBox="432 438 120 108" fill="none" stroke="#666" strokeWidth="4">
                <circle cx="497" cy="494" r="36" /><circle cx="472" cy="514" r="20" fill="#fafafa" />
              </MarkIcon>
              大小
            </MarkCard>
            <MarkCard>
              <MarkIcon width="40" height="36" viewBox="720 438 120 108" fill="none">
                <rect x="740" y="464" width="80" height="68" rx="3" stroke="#666" strokeWidth="4" />
                <text x="780" y="516" textAnchor="middle" fontSize="48" fill="#666" fontFamily="'Liberation Serif', serif">T</text>
              </MarkIcon>
              文本
            </MarkCard>
            <MarkCard>
              <MarkIcon width="40" height="36" viewBox="136 720 120 108" fill="none" stroke="#666" strokeWidth="4">
                <circle cx="197" cy="766" r="13" fill="#666" stroke="none" />
                <circle cx="163" cy="802" r="11" /><circle cx="197" cy="802" r="11" /><circle cx="230" cy="802" r="11" />
              </MarkIcon>
              详细信息
            </MarkCard>
            <MarkCard>
              <MarkIcon width="40" height="36" viewBox="432 720 120 108" fill="none" stroke="#666" strokeWidth="4" strokeLinejoin="round">
                <path d="M452 750H532V800H512V822L490 800H452Z" />
              </MarkIcon>
              工具提示
            </MarkCard>
          </MarkGrid>
        </Panel>
      </CardsColumn>

      <ViewColumn>
        <Shelf>
          <ShelfHead>
            <svg width="24" height="24" viewBox="0 0 24 24" stroke="#666" strokeWidth="5">
              <path d="M4 0V4M12 0V4M20 0V4" strokeWidth="4" />
              <path d="M4 7V24M12 7V24M20 7V24" />
            </svg>
            列
          </ShelfHead>
        </Shelf>
        <Shelf>
          <ShelfHead>
            <svg width="24" height="22" viewBox="0 0 24 22" stroke="#666" strokeWidth="4.500">
              <path d="M0 3H4M0 11H4M0 19H4" />
              <path d="M7 3H24M7 11H24M7 19H24" />
            </svg>
            行
          </ShelfHead>
        </Shelf>
        <Sheet>
          <SheetTitle>工作表 8</SheetTitle>
          <Plot>
            <DropCell $right $under />
            <DropCell $under>在此处放置字段</DropCell>
            <DropCell $right>在此处放置字段</DropCell>
            <DropCell>在此处放置字段</DropCell>
          </Plot>
        </Sheet>
      </ViewColumn>
    </Main>

    <TabBar>
      <SourceTab><DbIcon w={15} h={22} c="#444" />数据源</SourceTab>
      {['3.1', '3.2', '3.3', '3.4', '3.5', '4.1', '4.2'].map(t => <SheetTab key={t} $w={64.3}>{t}</SheetTab>)}
      <SheetTab $w={120} $active>工作表 8</SheetTab>
      <SheetTab $w={63} $shift={4}>
        <svg width="26" height="30" viewBox="0 0 26 30" fill="none" stroke="#666" strokeWidth="1.700">
          <path d="M19 15V1H1V24H12" />
          <path d="M6 18V20M10 13V20M14 16V20" />
          <path d="M20 16V30M13 23H26" stroke="#666" strokeWidth="4" />
        </svg>
      </SheetTab>
      <SheetTab $w={63}>
        <svg width="30" height="30" viewBox="0 0 30 30" fill="none" stroke="#666" strokeWidth="1.700">
          <path d="M19 15V1H1V22H12M1 9H19M10 1V22" />
          <path d="M22 16V30M15 23H29" stroke="#666" strokeWidth="4" />
        </svg>
      </SheetTab>
      <SheetTab $w={64} $shift={4}>
        <svg width="30" height="30" viewBox="0 0 30 30" fill="none" stroke="#666" strokeWidth="1.700">
          <path d="M1 1L10 7L20 1V15M1 1V20L10 25M10 7V25" />
          <path d="M21 16V30M14 23H28" stroke="#666" strokeWidth="4" />
        </svg>
      </SheetTab>
    </TabBar>
    <Watermark>https://blog.csdn.net/D_Ddd0701</Watermark>

    <ShowMe>
      <ShowMeHead>
        <HeadFiller />
        <HeadTab>
          <svg width="32" height="30" viewBox="0 0 32 30">
            <rect y="0" width="25" height="6" fill="#8a6d9b" /><rect y="8" width="32" height="6" fill="#7fa6cf" />
            <rect y="16" width="13" height="6" fill="#f2a477" /><rect y="24" width="19" height="6" fill="#f7717f" />
          </svg>
          智能推荐
        </HeadTab>
      </ShowMeHead>
      <ShowMeBody>
        <TileGrid>{thumbs}</TileGrid>
        <Hint>对于饼图，尝试</Hint>
        <HintRow $top={17}>1 个或多个<HintPill $c="#4c96b3" $left={6}>维度</HintPill></HintRow>
        <HintRow $top={16}>1 个或 2 个<HintPill $c="#00b180" $left={6}>度量</HintPill></HintRow>
      </ShowMeBody>
    </ShowMe>

    <Callout $x={28} $y={719} $w={434} $h={74} />
    <Callout $x={17} $y={1177} $w={439} $h={76} />
    <Callout $x={2703} $y={172} $w={190} $h={138} />
  </Page>
);

export default App;
